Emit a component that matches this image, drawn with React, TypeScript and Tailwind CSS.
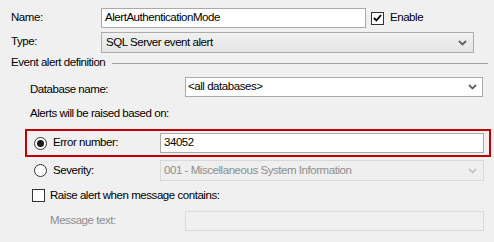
import React from "react";

function Chevron({ className }: { className?: string }) {
  return (
    <svg width="9" height="6" viewBox="0 0 9 6" className={className}>
      <path d="M1 1 L4.5 4.5 L8 1" fill="none" stroke="currentColor" strokeWidth="1.8" />
    </svg>
  );
}

function Radio({ checked }: { checked?: boolean }) {
  return (
    <span className="flex h-[13px] w-[13px] items-center justify-center rounded-full border border-[#333] bg-white">
      {checked && <span className="h-[7px] w-[7px] rounded-full bg-[#1a1a1a]" />}
    </span>
  );
}

export default function App() {
  return (
    <div
      className="relative h-[242px] w-[494px] overflow-hidden bg-[#f0f0f0] text-[11.5px] tracking-[-0.45px] text-black"
      style={{ fontFamily: '"Liberation Sans", Arial, sans-serif' }}
    >
      {/* name */}
      <div className="mt-[8px] flex h-[20px] items-center">
        <span className="w-[101px] pl-[11px]">Name:</span>
        <div className="flex h-[20px] w-[265px] items-center border border-[#a9a9a9] bg-white pl-[3px]">
          AlertAuthenticationMode
        </div>
        <span className="ml-[5px] flex h-[13px] w-[13px] items-center justify-center border border-[#333] bg-white">
          <svg width="9" height="8" viewBox="0 0 9 8">
            <path d="M1 4 L3.5 6.5 L8 1" fill="none" stroke="#000" strokeWidth="1.8" />
          </svg>
        </span>
        <span className="ml-[6px]">Enable</span>
      </div>

      {/* type */}
      <div className="mt-[4px] flex h-[21px] items-start">
        <span className="w-[101px] pl-[11px] pt-[1px]">Type:</span>
        <div className="flex h-[21px] w-[373px] items-center justify-between border border-[#acacac] bg-gradient-to-b from-[#f0f0f0] to-[#e5e5e5] pl-[4px] pr-[6px]">
          <span>SQL Server event alert</span>
          <Chevron className="text-[#606060]" />
        </div>
      </div>

      {/* group header */}
      <div className="mt-[3px] flex h-[14px] items-center">
        <span className="pl-[11px]">Event alert definition</span>
        <div className="ml-[7px] mr-[6px] h-0 flex-1 border-t border-[#a0a0a0]" />
      </div>

      {/* database */}
      <div className="mt-[7px] flex h-[20px] items-center">
        <span className="w-[185px] pl-[30px] pt-[5px]">Database name:</span>
        <div className="flex h-[20px] w-[298px] items-center justify-between border border-[#a9a9a9] bg-white pl-[2px] pr-[5px]">
          <span>&lt;all databases&gt;</span>
          <Chevron className="text-[#606060]" />
        </div>
      </div>

      <div className="mt-[8px] h-[14px] pl-[30px]">Alerts will be raised based on:</div>

      {/* error number, highlighted */}
      <div className="ml-[25px] mt-[10px] flex h-[28px] w-[466px] items-center border-2 border-[#c00000] pl-[7px]">
        <Radio checked />
        <span className="ml-[6px] w-[107px]">Error number:</span>
        <div className="flex h-[20px] w-[324px] items-center border border-[#a9a9a9] bg-white pl-[3px]">
          34052
        </div>
      </div>

      {/* severity */}
      <div className="mt-[3px] flex h-[21px] items-center pl-[34px]">
        <Radio />
        <span className="ml-[6px] w-[107px]">Severity:</span>
        <div className="flex h-[21px] w-[324px] items-center justify-between border border-[#d9d9d9] bg-[#efefef] pl-[3px] pr-[6px] text-[#8d8d8d]">
          <span>001 - Miscellaneous System Information</span>
          <Chevron className="text-[#c4c4c4]" />
        </div>
      </div>

      {/* raise alert */}
      <div className="mt-[8px] flex h-[13px] items-center pl-[32px]">
        <span className="h-[13px] w-[13px] border border-[#333] bg-white" />
        <span className="ml-[5px]">Raise alert when message contains:</span>
      </div>

      {/* message text */}
      <div className="mt-[9px] flex h-[20px] items-center">
        <span className="w-[185px] pl-[50px] text-[#8d8d8d]">Message text:</span>
        <div className="h-[20px] w-[299px] border border-[#dadada] bg-[#f0f0f0]" />
      </div>
    </div>
  );
}
